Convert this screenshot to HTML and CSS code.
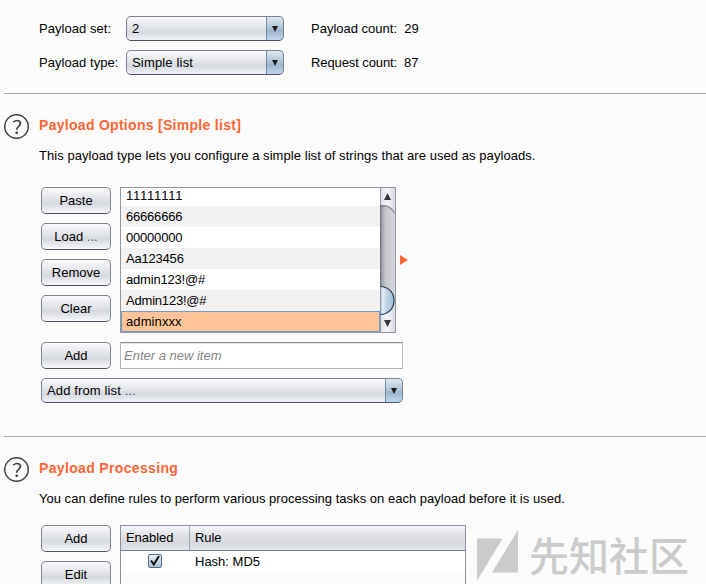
FILE: index.html
```html
<!DOCTYPE html>
<html lang="en">
<head>
<meta charset="utf-8">
<title>Payloads</title>
<link rel="stylesheet" href="styles.css">
</head>
<body>
<svg class="defs" width="0" height="0" aria-hidden="true">
  <symbol id="help" viewBox="0 0 26 26">
    <circle cx="12.500" cy="12.500" r="11.800" fill="none" stroke="#404040" stroke-width="1.5"/>
    <path d="M9.300 8.100 C10.500 7 11.800 6.500 13 6.500 C15.300 6.500 16.400 7.800 16.400 9.500 C16.400 12.500 12.700 12.400 12.700 15.700" fill="none" stroke="#404040" stroke-width="1.7"/>
    <rect x="11.500" y="17.500" width="2.400" height="2.500" rx=".8" fill="#404040"/>
  </symbol>
</svg>
<main class="page">
  <section class="sets">
    <span class="label">Payload set:</span>
    <div class="combo"><span>2</span><i class="drop"></i></div>
    <span class="label count">Payload count:&nbsp; 29</span>
    <span class="label">Payload type:</span>
    <div class="combo"><span class="type">Simple list</span><i class="drop"></i></div>
    <span class="label count requests">Request count:&nbsp; 87</span>
  </section>

  <section class="panel options">
    <svg class="help"><use href="#help"/></svg>
    <div class="body">
      <h2 class="t-options">Payload Options [Simple list]</h2>
      <p class="d-options">This payload type lets you configure a simple list of strings that are used as payloads.</p>
      <div class="columns">
        <div class="buttons">
          <button>Paste</button>
          <button>Load <span class="dots">...</span></button>
          <button>Remove</button>
          <button>Clear</button>
        </div>
        <div class="listbox">
          <ul class="items">
            <li>11111111</li>
            <li>66666666</li>
            <li>00000000</li>
            <li>Aa123456</li>
            <li>admin123!@#</li>
            <li>Admin123!@#</li>
            <li class="selected">adminxxx</li>
          </ul>
          <svg class="scroll" width="15" height="144" viewBox="0 0 15 144">
            <defs>
              <linearGradient id="track"><stop offset="0" stop-color="#727278"/><stop offset=".15" stop-color="#a7a7ae"/><stop offset=".4" stop-color="#c9c9d0"/><stop offset="1" stop-color="#d4d4da"/></linearGradient>
              <linearGradient id="cap"><stop offset="0" stop-color="#dfe0e6"/><stop offset=".5" stop-color="#f3f4f8"/><stop offset="1" stop-color="#d9dbe2"/></linearGradient>
              <linearGradient id="thumb"><stop offset="0" stop-color="#a3bfd4"/><stop offset=".2" stop-color="#e6eff7"/><stop offset=".45" stop-color="#c0d4e5"/><stop offset="1" stop-color="#a4bed5"/></linearGradient>
            </defs>
            <rect width="15" height="144" fill="url(#cap)"/>
            <path d="M0 17 H4 Q11 17 15 25 V113 H0Z" fill="url(#track)"/>
            <path d="M0 18 H5 Q11 18.500 14.500 25" fill="none" stroke="#68686e" stroke-width="1.500" opacity=".6"/>
            <path d="M0 98.500 C8 98.500 14 104 14 112.500 C14 121 8 126.500 0 126.500Z" fill="url(#thumb)"/>
            <path d="M0 98.500 C8 98.500 14 104 14 112.500 C14 121 8 126.500 0 126.500" fill="none" stroke="#29415a" stroke-width="1.200"/>
            <path d="M7.500 5 L11 12 H4Z M7.500 139 L11 132 H4Z" fill="#333338"/>
            <path d="M.5 0 V144" stroke="#74747b" opacity=".65"/>
          </svg>
        </div>
        <i class="marker"></i>
      </div>
      <div class="entry">
        <button>Add</button>
        <div class="field">Enter a new item</div>
      </div>
      <div class="combo wide"><span>Add from list <span class="dots">...</span></span><i class="drop"></i></div>
    </div>
  </section>

  <section class="panel processing">
    <svg class="help"><use href="#help"/></svg>
    <div class="body">
      <h2 class="t-processing">Payload Processing</h2>
      <p class="d-processing">You can define rules to perform various processing tasks on each payload before it is used.</p>
      <div class="columns">
        <div class="buttons">
          <button>Add</button>
          <button>Edit</button>
        </div>
        <div class="table">
          <div class="thead"><span>Enabled</span><span>Rule</span></div>
          <div class="row">
            <span class="check"><svg width="14" height="14" viewBox="0 0 14 14"><path d="M3 6.500 L5.800 10.500 L11 2" fill="none" stroke="#111" stroke-width="2"/></svg></span>
            <span>Hash: MD5</span>
          </div>
        </div>
        <div class="brand">
          <svg width="42" height="52" viewBox="0 0 42 52"><path d="M0 8.500 H25.500 L0 51Z M41 0 V42.500 H15Z" fill="#cbcbcb"/></svg>
          <span>先知社区</span>
        </div>
      </div>
    </div>
  </section>
</main>
</body>
</html>
```

FILE: styles.css
```css
* { box-sizing: border-box; }
html, body { margin: 0; height: 584px; overflow: hidden; }
body { background: #fbfbfb; color: #000; font: 13px/16px "Liberation Sans", Arial, sans-serif; }
.defs { position: absolute; }
.page { width: 706px; }

.sets {
  display: grid;
  grid-template-columns: 87px 158px 1fr;
  grid-auto-rows: 25px;
  row-gap: 9px;
  align-items: center;
  height: 94px;
  margin-left: 4px;
  padding: 16px 0 0 35px;
  border-bottom: 1px solid #a6a7b3;
}
.label { letter-spacing: .05px; }
.count { padding-left: 27px; letter-spacing: 0; }
.requests { letter-spacing: -.1px; }
.type { letter-spacing: .17px; }
.dots { color: #4b5a72; }

.combo {
  display: flex;
  justify-content: space-between;
  height: 25px;
  border: 1px solid #7b8290;
  border-bottom-color: #4b5361;
  border-radius: 5px;
  background: linear-gradient(#fafafc, #e5e7eb 40%, #d6d9df 65%, #f0f1f8);
  line-height: 23px;
  overflow: hidden;
}
.combo > span { padding-left: 5px; }
.wide > span { letter-spacing: .13px; }
.drop {
  display: grid;
  place-items: center;
  width: 18px;
  margin: -1px;
  border: 1px solid #4b6986;
  border-left-color: #6f8aa3;
  border-bottom-color: #24405c;
  border-radius: 0 5px 5px 0;
  background: linear-gradient(#e0e8ef, #b2c5d6 45%, #9eb5ca 60%, #bfd6ec);
}
.drop::after {
  content: "";
  border: solid transparent;
  border-width: 6px 3.5px 0;
  border-top-color: #1b1b1f;
}

.panel { display: flex; margin-left: 4px; }
.options { height: 343px; border-bottom: 1px solid #a6abb3; }
.help { flex: none; width: 26px; height: 26px; margin: 20px 0 0; }
.body { padding: 22px 0 0 9px; }
h2 { margin: 0; font-size: 14px; line-height: 18px; color: #ff6633; white-space: nowrap; }
.t-options { letter-spacing: .29px; }
.t-processing { letter-spacing: .34px; }
p { margin: 14px 0 0; white-space: nowrap; }
.d-options { letter-spacing: .058px; }
.d-processing { letter-spacing: .018px; }
.columns { display: flex; margin: 23px 0 0 2px; }
.processing .columns { margin-top: 18px; }
.buttons { display: flex; flex-direction: column; gap: 9px; width: 70px; margin-right: 9px; }
button {
  width: 70px;
  height: 27px;
  padding: 0;
  border: 1px solid #81858e;
  border-bottom-color: #4f545e;
  border-radius: 5px;
  background: linear-gradient(#fafafc, #e4e5e9 40%, #d6d9df 62%, #f6f7fc);
  color: #000;
  font: inherit;
}

.listbox {
  display: flex;
  width: 276px;
  height: 146px;
  border: 1px solid #9297a1;
  background: #fff;
}
.items { width: 259px; margin: 0; padding: 0; list-style: none; overflow: hidden; font-kerning: none; letter-spacing: -.2px; }
.items li { height: 21px; padding-left: 5px; line-height: 22px; }
.items li:first-child { height: 18px; line-height: 16px; }
.items li:nth-child(even) { background: #f2f2f2; }
.items .selected { height: 21px; padding-left: 4px; border: 1px solid #739bc4; background: #ffc599; line-height: 19px; letter-spacing: .1px; }
.scroll { flex: none; }
.marker {
  align-self: center;
  margin-left: 4px;
  border: solid transparent;
  border-width: 5px 0 5px 8px;
  border-left-color: #ff6633;
}

.entry { display: flex; gap: 9px; margin: 9px 0 0 2px; }
.field {
  width: 283px;
  height: 27px;
  padding-left: 3px;
  border: 1px solid #b6b6b6;
  border-top-color: #8c8c8c;
  background: #fff;
  box-shadow: inset 0 1px #e2e2e2;
  color: #858585;
  font-style: italic;
  line-height: 25px;
}
.wide { width: 362px; margin: 9px 0 0 2px; }

.table { width: 346px; height: 80px; border: 1px solid #8c919d; }
.thead {
  display: grid;
  grid-template-columns: 69px 1fr;
  height: 25px;
  border-bottom: 1px solid #7b7f89;
  background: linear-gradient(#f7f8fb, #e1e3e7 35%, #d7d9de 70%, #e3e6ee);
  line-height: 24px;
}
.thead span { padding-left: 5px; letter-spacing: -.05px; }
.thead span:first-child { border-right: 1px solid #a0a4ae; }
.row { display: grid; grid-template-columns: 69px 1fr; height: 21px; background: #fff; line-height: 21px; }
.row span:last-child { padding-left: 5px; }
.check {
  width: 14px;
  height: 14px;
  margin: 3px 0 0 27px;
  border: 1px solid #50667e;
  border-radius: 2px;
  background: linear-gradient(#edf2f6, #a9bfd3);
}
.check svg { display: block; margin: -1px; }
.brand { display: flex; height: 54px; margin: 5px 0 0 11px; color: #cbcbcb; }
.brand span { margin: -2px 0 0 10px; font: 500 40px/52px "Noto Sans CJK SC", sans-serif; white-space: nowrap; }
```
